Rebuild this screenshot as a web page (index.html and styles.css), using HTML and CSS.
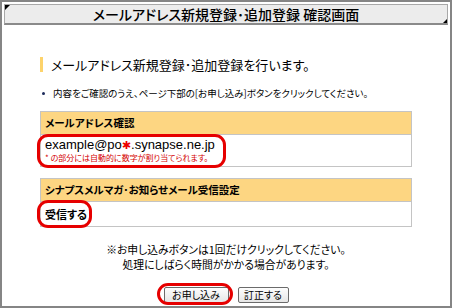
FILE: index.html
```html
<!DOCTYPE html>
<html lang="ja">
<head>
  <meta charset="UTF-8" />
  <title>メールアドレス新規登録･追加登録 確認画面</title>
  <link rel="stylesheet" href="styles.css">
</head>
<body>
  <div class="frame">
    <!-- 画面タイトル -->
    <h1 class="title-bar">
      <span class="corner corner-tl"></span>
      メールアドレス新規登録･追加登録 確認画面
      <span class="corner corner-br"></span>
    </h1>

    <div class="content">
      <h2 class="lead">メールアドレス新規登録･追加登録を行います。</h2>

      <ul class="notes">
        <li>内容をご確認のうえ、ページ下部の[お申し込み]ボタンをクリックしてください。</li>
      </ul>

      <!-- メールアドレス確認 -->
      <table class="confirm">
        <tr><th>メールアドレス確認</th></tr>
        <tr>
          <td class="mail-cell">
            <div class="mark mark-mail"></div>
            <div class="mail">example@po<span class="asterisk">✱</span>.synapse.ne.jp</div>
            <div class="mail-note">* の部分には自動的に数字が割り当てられます。</div>
          </td>
        </tr>
      </table>

      <!-- 受信設定 -->
      <table class="confirm">
        <tr><th>シナプスメルマガ･お知らせメール受信設定</th></tr>
        <tr>
          <td class="recv-cell">
            <div class="mark mark-recv"></div>
            <b>受信する</b>
          </td>
        </tr>
      </table>

      <p class="caution">※お申し込みボタンは1回だけクリックしてください。<br>処理にしばらく時間がかかる場合があります。</p>

      <div class="buttons">
        <span class="btn-wrap">
          <span class="mark mark-btn"></span>
          <button class="btn btn-apply">お申し込み</button>
        </span>
        <button class="btn btn-fix">訂正する</button>
      </div>
    </div>
  </div>
</body>
</html>
```

FILE: styles.css
```css
/* ---------- 全体 ---------- */
body {
  margin: 0;
  font-family: "Noto Sans CJK JP", "Liberation Sans", sans-serif;
  font-feature-settings: "palt";
  color: #000;
  background: #fff;
}

.frame {
  width: 452px;
  height: 308px;
  box-sizing: border-box;
  border: 2px solid #858585;
  padding: 2px;
  overflow: hidden;
}

/* ---------- タイトルバー ---------- */
.title-bar {
  position: relative;
  margin: 0;
  height: 21px;
  box-sizing: border-box;
  border: 1px solid #a8a8a8;
  border-bottom: 2px solid #8a8a8a;
  background: #ececec;
  text-align: center;
  font-size: 14px;
  font-weight: 500;
  line-height: 18px;
}

.corner {
  position: absolute;
  width: 0;
  height: 0;
}

.corner-tl {
  top: 0;
  left: 0;
  border-top: 5px solid #000;
  border-right: 5px solid transparent;
}

.corner-br {
  right: 0;
  bottom: 0;
  border-bottom: 4px solid #000;
  border-left: 4px solid transparent;
}

/* ---------- 本文 ---------- */
.content {
  padding: 0 36px;
}

.lead {
  margin: 32px 0 0;
  padding-left: 8px;
  border-left: 3px solid #fdd36b;
  font-size: 13px;
  font-weight: normal;
  line-height: 15px;
}

.notes {
  margin: 15px 0 0;
  padding: 0;
  list-style: none;
  font-size: 9.5px;
  line-height: 12px;
}

.notes li {
  position: relative;
  padding-left: 13px;
}

.notes li::before {
  content: '';
  position: absolute;
  left: 2px;
  top: 5px;
  width: 3px;
  height: 3px;
  border-radius: 50%;
  background: #1b2a5a;
}

/* ---------- 確認テーブル ---------- */
.confirm {
  width: 372px;
  margin-top: 12px;
  border-collapse: collapse;
  border: 1px solid #c4c4c4;
}

.confirm + .confirm {
  margin-top: 11px;
}

.confirm th {
  height: 22px;
  padding: 0 4px;
  background: #fdd682;
  border-bottom: 1px solid #c4c4c4;
  text-align: left;
  font-size: 10.5px;
  line-height: 14px;
}

.confirm td {
  position: relative;
  padding: 0 4px;
  background: #fff;
}

.mail-cell {
  height: 31px;
}

.mail {
  font-family: "Liberation Sans", Arial, sans-serif;
  font-size: 13px;
  line-height: 14px;
}

.asterisk {
  color: #e00;
  font-family: "DejaVu Sans", sans-serif;
  font-size: 11px;
  font-weight: bold;
}

.mail-note {
  color: #d40000;
  font-size: 8px;
  line-height: 10px;
}

.recv-cell {
  height: 24px;
  font-size: 11px;
}

/* 赤丸の強調 */
.mark {
  position: absolute;
  border: 3px solid #e60000;
  border-radius: 11px;
}

.mark-mail {
  left: -4px;
  top: -1px;
  width: 183px;
  height: 28px;
}

.mark-recv {
  left: -4px;
  top: -2px;
  width: 49px;
  height: 22px;
}

/* ---------- 注意書き ---------- */
.caution {
  margin: 15px 0 0;
  text-align: center;
  font-size: 10.8px;
  line-height: 15px;
}

/* ---------- ボタン ---------- */
.buttons {
  margin-top: 15px;
  text-align: center;
  font-size: 0;
}

.btn-wrap {
  position: relative;
  display: inline-block;
  margin-right: 9px;
}

.mark-btn {
  left: -7px;
  top: -4px;
  width: 70px;
  height: 16px;
}

.btn {
  height: 16px;
  padding: 0;
  font-family: "Noto Sans CJK JP", sans-serif;
  font-feature-settings: "palt";
  font-size: 10px;
  line-height: 12px;
  color: #000;
  background: linear-gradient(#fdfdfd, #e6e6e6);
  border: 1px solid #6b6b6b;
  border-radius: 2px;
  vertical-align: top;
}

.btn-apply {
  width: 65px;
}

.btn-fix {
  width: 51px;
}
```
